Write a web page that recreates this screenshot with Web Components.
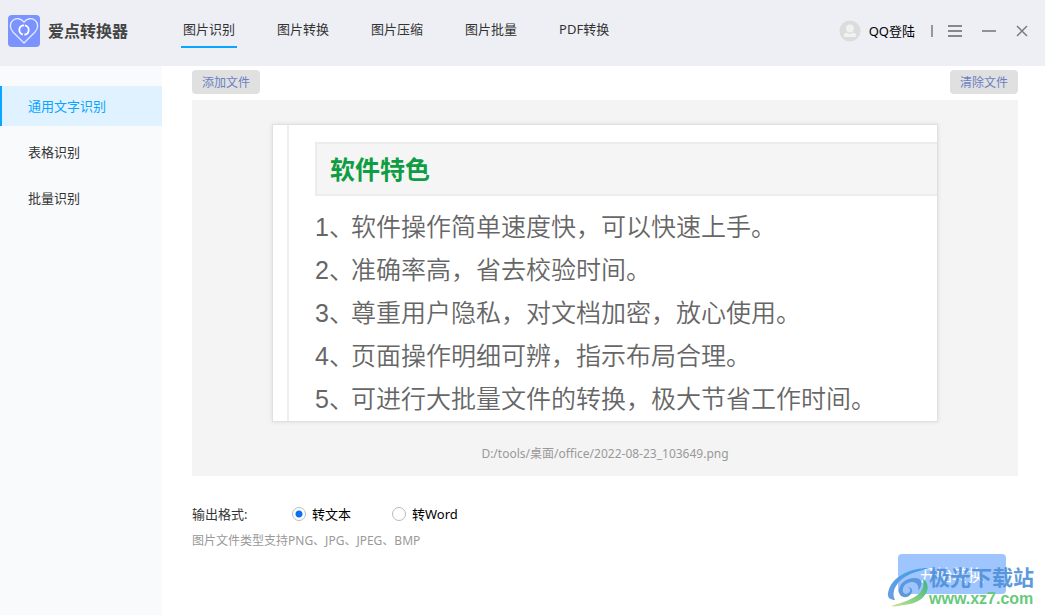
<!DOCTYPE html>
<html lang="zh-CN">
<head>
<meta charset="utf-8">
<title>爱点转换器</title>
<style>
html, body { margin: 0; }
body { font: 13px/20px "Noto Sans", "Noto Sans CJK SC", sans-serif; color: #333; background: #fff; }
</style>
</head>
<body>
<converter-app></converter-app>

<template id="t-app">
<style>
:host { display: flex; flex-direction: column; min-height: 100vh; position: relative; }
.body { display: flex; flex: 1; }
main { flex: 1; min-width: 0; box-sizing: border-box; padding: 4px 27px 21px 30px; display: flex; flex-direction: column; }
.bar { display: flex; justify-content: space-between; margin-bottom: 6px; }
format-picker { margin-top: 28px; }
.hint { margin: 8px 0 0; font-size: 12px; line-height: 18px; color: #999; }
.actions { display: flex; justify-content: flex-end; margin-top: auto; padding-right: 12px; }
site-mark { position: absolute; right: 11px; bottom: 6px; }
</style>
<app-header></app-header>
<div class="body">
  <side-menu></side-menu>
  <main>
    <div class="bar"><tool-button>添加文件</tool-button><tool-button>清除文件</tool-button></div>
    <file-preview>D:/tools/桌面/office/2022-08-23_103649.png</file-preview>
    <format-picker></format-picker>
    <p class="hint">图片文件类型支持PNG、JPG、JPEG、BMP</p>
    <div class="actions"><start-button>开始转换</start-button></div>
  </main>
</div>
<site-mark></site-mark>
</template>

<template id="t-header">
<style>
:host { display: block; background: #eeeff5; }
header { display: flex; height: 66px; }
.brand { display: flex; align-items: center; align-self: flex-start; gap: 8px; width: 173px; padding: 15px 0 0 8px; font-size: 16px; font-weight: 700; line-height: 32px; color: #444; box-sizing: border-box; }
.brand svg { flex: none; }
nav { display: flex; align-items: flex-start; gap: 38px; margin: 19px 0 0 8px; flex: 1; }
.user { display: flex; align-items: center; align-self: flex-start; height: 32px; margin-top: 15px; padding-right: 17px; color: #000; }
.user a { display: flex; align-items: center; gap: 8px; color: #000; text-decoration: none; }
.sep { width: 2px; height: 12px; background: #969699; margin: 0 15px 0 16px; }
button { border: 0; padding: 0; background: none; display: flex; margin-right: 20px; }
button:last-child { margin-right: 0; }
</style>
<header>
  <div class="brand">
    <svg width="32" height="32" viewBox="0 0 32 32" fill="none" aria-hidden="true">
      <rect width="32" height="32" rx="4" fill="#7b93ff"/>
      <path d="M16 28 5.200 17.300C1.500 13.400 1.500 8.400 4.700 5.500C8.200 2.300 13.400 3.500 16 7.200C18.600 3.500 23.800 2.300 27.300 5.500C30.500 8.400 30.500 13.400 26.800 17.300Z" stroke="#e5eaff" stroke-width="1.300" stroke-linejoin="round"/>
      <circle cx="16" cy="15" r="4.700" stroke="#fff" stroke-width="1.800" stroke-dasharray="13.200 1.560" transform="rotate(-80 16 15)"/>
    </svg>
    <span>爱点转换器</span>
  </div>
  <nav>
    <nav-tab active>图片识别</nav-tab><nav-tab>图片转换</nav-tab><nav-tab>图片压缩</nav-tab><nav-tab>图片批量</nav-tab><nav-tab>PDF转换</nav-tab>
  </nav>
  <div class="user">
    <a href="#login">
      <svg width="22" height="22" viewBox="0 0 22 22" aria-hidden="true"><circle cx="11" cy="11" r="10.500" fill="#dcdcdc"/><circle cx="11" cy="8.500" r="3.900" fill="#f1f1f4"/><path d="M4.800 17V15.800Q4.800 13 8 12.800Q11 14.500 14 12.800Q17.200 13 17.200 15.800V17Z" fill="#f1f1f4"/></svg>
      <span>QQ登陆</span>
    </a>
    <span class="sep"></span>
    <button aria-label="菜单"><svg width="14" height="14" viewBox="0 0 14 14"><path d="M0 2H14M0 7H14M0 12H14" stroke="#666" stroke-width="1.600"/></svg></button>
    <button aria-label="最小化"><svg width="14" height="14" viewBox="0 0 14 14"><path d="M0 7H14" stroke="#929295" stroke-width="2"/></svg></button>
    <button aria-label="关闭"><svg width="12" height="12" viewBox="0 0 12 12"><path d="M1 1 11 11M11 1 1 11" stroke="#7c7c80" stroke-width="1.500"/></svg></button>
  </div>
</header>
</template>

<template id="t-tab">
<style>
:host { display: block; }
a { display: block; padding: 0 2px 7px; border-bottom: 2px solid transparent; color: #333; text-decoration: none; white-space: nowrap; }
:host([active]) a { border-color: #0aa5ff; }
</style>
<a href="#tab"><slot></slot></a>
</template>

<template id="t-menu">
<style>
:host { display: block; width: 162px; flex: none; background: #f9fafc; }
nav { display: flex; flex-direction: column; gap: 6px; padding-top: 20px; }
</style>
<nav><menu-item active>通用文字识别</menu-item><menu-item>表格识别</menu-item><menu-item>批量识别</menu-item></nav>
</template>

<template id="t-item">
<style>
:host { display: block; }
a { display: block; padding-left: 26px; border-left: 2px solid transparent; line-height: 40px; color: #333; text-decoration: none; }
:host([active]) a { border-color: #0aa5ff; background: #e0f1ff; color: #0aa5ff; }
</style>
<a href="#item"><slot></slot></a>
</template>

<template id="t-tool">
<style>
:host { display: block; }
button { display: block; border: 0; border-radius: 4px; padding: 2px 10px 0; background: #e0e0e0; color: #6a7fc0; font: inherit; font-size: 12px; line-height: 22px; }
</style>
<button><slot></slot></button>
</template>

<template id="t-preview">
<style>
:host { display: block; background: #f4f4f4; }
figure { margin: 0; padding: 25px 80px 12px; display: flex; flex-direction: column; align-items: center; }
.page { box-sizing: border-box; width: 100%; max-width: 664px; padding-left: 14px; background: #fff; box-shadow: 0 0 0 1px #e0e0e0, 0 0 4px 1px #ddd; }
.sheet { border-left: 2px solid #eee; padding: 17px 0 0 26px; color: #666; }
h2 { margin: 0 0 10px; padding-left: 13px; border: 2px solid #ececec; border-right: 0; background: #f5f5f5; color: #0f9d43; font-size: 25px; line-height: 50px; }
ol { list-style: none; margin: 0; padding: 0; font-size: 25px; line-height: 43px; font-weight: 350; font-family: "Liberation Sans", "Noto Sans CJK SC", sans-serif; color: #666; }
li { display: flex; }
li span { width: 36px; white-space: nowrap; }
figcaption { margin-top: 23px; color: #999; font-size: 12px; }
</style>
<figure>
  <div class="page"><div class="sheet">
    <h2>软件特色</h2>
    <ol>
      <li><span>1、</span>软件操作简单速度快，可以快速上手。</li>
      <li><span>2、</span>准确率高，省去校验时间。</li>
      <li><span>3、</span>尊重用户隐私，对文档加密，放心使用。</li>
      <li><span>4、</span>页面操作明细可辨，指示布局合理。</li>
      <li><span>5、</span>可进行大批量文件的转换，极大节省工作时间。</li>
    </ol>
  </div></div>
  <figcaption><slot></slot></figcaption>
</figure>
</template>

<template id="t-format">
<style>
:host { display: block; }
div { display: flex; align-items: center; }
.title { width: 100px; }
label { display: flex; align-items: center; gap: 6px; width: 100px; color: #000; }
input { appearance: none; box-sizing: border-box; width: 14px; height: 14px; margin: 0; border: 1px solid #bbb; border-radius: 50%; background: #fff; }
input:checked { background: radial-gradient(circle, #0a6ff0 3px, #fff 4px); }
</style>
<div role="radiogroup" aria-labelledby="title">
  <span class="title" id="title">输出格式:</span>
  <label><input type="radio" name="format" checked>转文本</label>
  <label><input type="radio" name="format">转Word</label>
</div>
</template>

<template id="t-start">
<style>
:host { display: block; }
button { display: block; width: 108px; border: 0; border-radius: 4px; padding: 2px 0 0; background: #9fc5ff; color: #fff; font: inherit; font-size: 16px; line-height: 38px; }
</style>
<button><slot></slot></button>
</template>

<template id="t-mark">
<style>
:host { display: flex; align-items: center; pointer-events: none; }
svg { flex: none; margin-right: -2px; }
.name { font-size: 21px; line-height: 24px; font-weight: 700; color: #4c8fd8; opacity: .9; }
.url { font: bold 16px/20px "Liberation Sans", sans-serif; color: #67c97c; }
</style>
<svg width="44" height="42" viewBox="0 0 44 42" aria-hidden="true">
  <defs>
    <linearGradient id="b" x1="0" y1="1" x2="1" y2="0"><stop stop-color="#6b9fe0"/><stop offset="1" stop-color="#3b9fe8"/></linearGradient>
    <linearGradient id="g" x1="0" y1="1" x2="1" y2="0"><stop stop-color="#c5e58c"/><stop offset="1" stop-color="#35b583"/></linearGradient>
  </defs>
  <path d="M43 2C25 1 4 10 1 27C0 32 4 34 8 34C3 24 12 12 26 7C32 5 38 3 43 2Z" fill="url(#b)"/>
  <path d="M28 12C18 12 11 19 12 26C13 32 20 33 24 28C27 24 24 20 20 22C25 21 24 27 19 28C14 28 15 19 21 17C28 14 33 19 31 25C37 18 35 12 28 12Z" fill="#5d98dc"/>
  <path d="M36 13C46 19 40 38 16 39C11 40 7 41 4 40C20 35 40 30 36 13Z" fill="url(#g)"/>
</svg>
<div><div class="name">极光下载站</div><div class="url">www.xz7.com</div></div>
</template>

<script>
const define = (name, id) => customElements.define(name, class extends HTMLElement {
  constructor() {
    super();
    this.attachShadow({ mode: 'open' }).append(document.getElementById(id).content.cloneNode(true));
  }
});
define('nav-tab', 't-tab');
define('menu-item', 't-item');
define('tool-button', 't-tool');
define('start-button', 't-start');
define('file-preview', 't-preview');
define('format-picker', 't-format');
define('site-mark', 't-mark');
define('side-menu', 't-menu');
define('app-header', 't-header');
define('converter-app', 't-app');
</script>
</body>
</html>
